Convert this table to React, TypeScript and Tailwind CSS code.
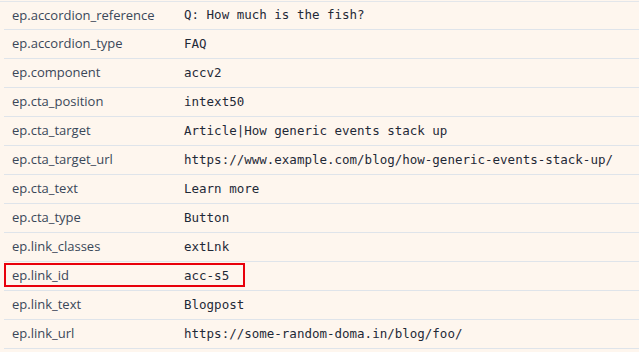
import React from "react";

const rows: [string, string][] = [
  ["ep.accordion_reference", "Q: How much is the fish?"],
  ["ep.accordion_type", "FAQ"],
  ["ep.component", "accv2"],
  ["ep.cta_position", "intext50"],
  ["ep.cta_target", "Article|How generic events stack up"],
  ["ep.cta_target_url", "https://www.example.com/blog/how-generic-events-stack-up/"],
  ["ep.cta_text", "Learn more"],
  ["ep.cta_type", "Button"],
  ["ep.link_classes", "extLnk"],
  ["ep.link_id", "acc-s5"],
  ["ep.link_text", "Blogpost"],
  ["ep.link_url", "https://some-random-doma.in/blog/foo/"],
];

const App: React.FC = () => {
  return (
    <div className="w-[639px] h-[352px] overflow-hidden bg-[#fef6ee]">
      <div className="mt-px h-px bg-[#e3e6ea]" />
      <div className="ml-1">
        {rows.map(([key, value], i) => (
          <div
            key={key}
            className={`relative flex items-center border-b border-[#dfe4ea] ${
              i === 0 ? "h-[28px]" : "h-[29px]"
            }`}
          >
            <div className="w-[180px] pl-2 text-[13px] text-[#3a4759] font-['Open_Sans',sans-serif]">
              {key}
            </div>
            <div className="text-[12.5px] text-[#1f2937] font-['DejaVu_Sans_Mono',monospace] whitespace-pre">
              {value}
            </div>
            {key === "ep.link_id" && (
              <div className="absolute left-0 top-[1px] w-[241px] h-[24px] border-2 border-[#e8000b]" />
            )}
          </div>
        ))}
      </div>
    </div>
  );
};

export default App;
